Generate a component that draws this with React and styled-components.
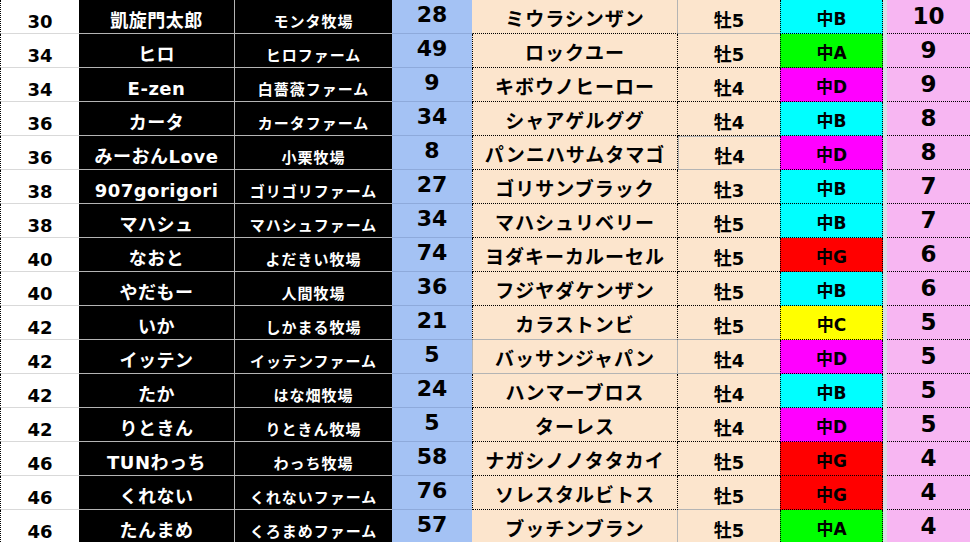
import React from "react";
import styled, { createGlobalStyle, css } from "styled-components";

const GlobalStyle = createGlobalStyle`
  html, body {
    margin: 0;
    padding: 0;
    background: #ffffff;
    overflow: hidden;
  }
  body {
    font-family: "DejaVu Sans", "Noto Sans CJK JP", sans-serif;
    font-weight: 700;
  }
`;

const DOT = "1px dotted #000000";
const GRID = "1px solid #b4b4b4";

const classColors = {
  A: "#00ff00",
  B: "#00ffff",
  C: "#ffff00",
  D: "#ff00ff",
  G: "#ff0000",
};

const rows = [
  { rank: 30, owner: "凱旋門太郎", farm: "モンタ牧場", no: 28, horse: "ミウラシンザン", sex: "牡5", cls: "B", pt: 10 },
  { rank: 34, owner: "ヒロ", farm: "ヒロファーム", no: 49, horse: "ロックユー", sex: "牡5", cls: "A", pt: 9 },
  { rank: 34, owner: "E-zen", farm: "白薔薇ファーム", no: 9, horse: "キボウノヒーロー", sex: "牡4", cls: "D", pt: 9 },
  { rank: 36, owner: "カータ", farm: "カータファーム", no: 34, horse: "シャアゲルググ", sex: "牡4", cls: "B", pt: 8 },
  { rank: 36, owner: "みーおんLove", farm: "小栗牧場", no: 8, horse: "パンニハサムタマゴ", sex: "牡4", cls: "D", pt: 8 },
  { rank: 38, owner: "907gorigori", farm: "ゴリゴリファーム", no: 27, horse: "ゴリサンブラック", sex: "牡3", cls: "B", pt: 7 },
  { rank: 38, owner: "マハシュ", farm: "マハシュファーム", no: 34, horse: "マハシュリベリー", sex: "牡5", cls: "B", pt: 7 },
  { rank: 40, owner: "なおと", farm: "よだきい牧場", no: 74, horse: "ヨダキーカルーセル", sex: "牡5", cls: "G", pt: 6 },
  { rank: 40, owner: "やだもー", farm: "人間牧場", no: 36, horse: "フジヤダケンザン", sex: "牡5", cls: "B", pt: 6 },
  { rank: 42, owner: "いか", farm: "しかまる牧場", no: 21, horse: "カラストンビ", sex: "牡5", cls: "C", pt: 5 },
  { rank: 42, owner: "イッテン", farm: "イッテンファーム", no: 5, horse: "バッサンジャパン", sex: "牡4", cls: "D", pt: 5 },
  { rank: 42, owner: "たか", farm: "はな畑牧場", no: 24, horse: "ハンマーブロス", sex: "牡4", cls: "B", pt: 5 },
  { rank: 42, owner: "りときん", farm: "りときん牧場", no: 5, horse: "ターレス", sex: "牡4", cls: "D", pt: 5 },
  { rank: 46, owner: "TUNわっち", farm: "わっち牧場", no: 58, horse: "ナガシノノタタカイ", sex: "牡5", cls: "G", pt: 4 },
  { rank: 46, owner: "くれない", farm: "くれないファーム", no: 76, horse: "ソレスタルビトス", sex: "牡5", cls: "G", pt: 4 },
  { rank: 46, owner: "たんまめ", farm: "くろまめファーム", no: 57, horse: "ブッチンブラン", sex: "牡5", cls: "A", pt: 4 },
];

// which borders of the horse / sex cells are plain grid lines instead of dots
const edges = {
  0: { horseLeft: "none", horseRight: "grid", sexBottom: "grid" },
  4: { sexLeft: "grid", sexBottom: "grid", sexTop: true },
  9: { horseBottom: "grid", sexBottom: "grid" },
  10: { horseLeft: "grid", horseBottom: "grid", horseRight: "grid", sexBottom: "grid" },
  14: { sexBottom: "grid" },
  15: { horseLeft: "none", horseRight: "grid", horseBottom: "grid", sexBottom: "grid" },
};

const line = (kind) => (kind === "grid" ? GRID : kind === "none" ? "1px solid transparent" : DOT);

const Sheet = styled.div`
  display: grid;
  grid-template-columns: 79px 156px 157px 80px 206px 102px 103px 4px 83px;
  grid-auto-rows: 34px;
  width: 970px;
`;

const Cell = styled.div`
  box-sizing: border-box;
  display: flex;
  align-items: center;
  justify-content: center;
  line-height: 1;
  white-space: nowrap;
`;

const RankCell = styled(Cell)`
  background: #ffffff;
  color: #000000;
  font-size: 18px;
  padding-top: 11px;
  border-left: ${DOT};
  border-bottom: 1px solid #d9d9d9;
`;

const OwnerCell = styled(Cell)`
  background: #000000;
  color: #ffffff;
  font-size: 18px;
  letter-spacing: 0.5px;
  padding-top: 9px;
  border-right: ${GRID};
  border-bottom: ${GRID};
`;

const FarmCell = styled(Cell)`
  background: #000000;
  color: #ffffff;
  font-size: 15px;
  letter-spacing: 1px;
  padding-top: 11px;
  border-bottom: ${GRID};
`;

const NumCell = styled(Cell)`
  background: #a4c2f4;
  color: #000000;
  font-size: 22px;
  padding-bottom: 3px;
  border-bottom: 1px solid #8eaadb;
`;

const HorseCell = styled(Cell)`
  background: #fce5cd;
  color: #000000;
  font-size: 19px;
  letter-spacing: 1px;
  padding-top: 6px;
  border-left: ${(p) => line(p.$left)};
  border-right: ${(p) => line(p.$right)};
  border-bottom: ${(p) => line(p.$bottom)};
`;

const SexCell = styled(Cell)`
  background: #fce5cd;
  color: #000000;
  font-size: 18px;
  padding-top: 8px;
  border-left: ${(p) => (p.$left === "grid" ? GRID : "none")};
  border-bottom: ${(p) => line(p.$bottom)};
  ${(p) =>
    p.$top &&
    css`
      box-shadow: inset 0 1px 0 #b4b4b4;
    `}
`;

const ClassCell = styled(Cell)`
  background: ${(p) => classColors[p.$grade]};
  color: #000000;
  font-size: 17px;
  padding-top: 6px;
  border-left: ${DOT};
  border-right: ${DOT};
  border-bottom: ${DOT};
`;

const Gap = styled.div`
  background: #d9dee6;
`;

const PointCell = styled(Cell)`
  background: #f7b6f2;
  color: #000000;
  font-size: 23px;
  padding-bottom: 0;
  border-bottom: ${DOT};
`;

export default function App() {
  return (
    <>
      <GlobalStyle />
      <Sheet>
        {rows.map((r, i) => {
          const e = edges[i] || {};
          return (
            <React.Fragment key={i}>
              <RankCell>{r.rank}</RankCell>
              <OwnerCell>{r.owner}</OwnerCell>
              <FarmCell>{r.farm}</FarmCell>
              <NumCell>{r.no}</NumCell>
              <HorseCell $left={e.horseLeft} $right={e.horseRight} $bottom={e.horseBottom}>
                {r.horse}
              </HorseCell>
              <SexCell $left={e.sexLeft} $bottom={e.sexBottom} $top={e.sexTop}>
                {r.sex}
              </SexCell>
              <ClassCell $grade={r.cls}>中{r.cls}</ClassCell>
              <Gap />
              <PointCell>{r.pt}</PointCell>
            </React.Fragment>
          );
        })}
      </Sheet>
    </>
  );
}
